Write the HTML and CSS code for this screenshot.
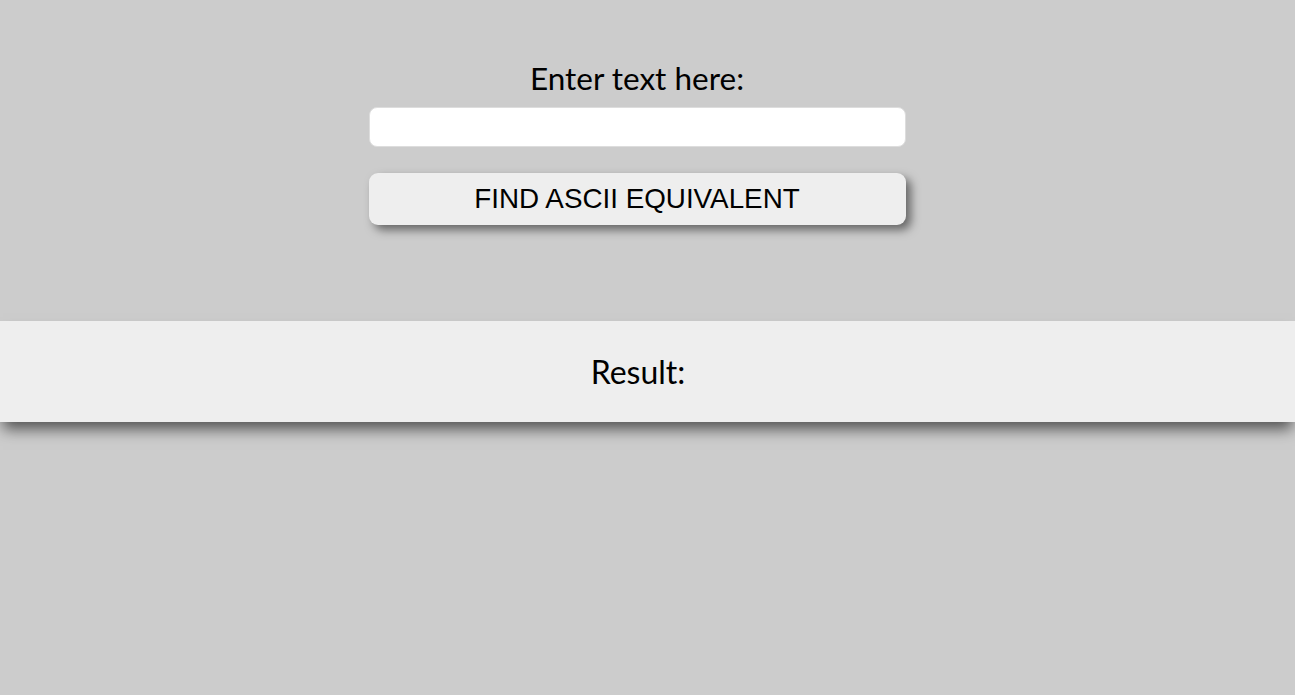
FILE: index.html
```html
<!DOCTYPE html>
<html>
<head>
<meta charset="utf-8">
<link rel="stylesheet" href="styles.css">
</head>
<body>
<div class="form">
  <label class="label" for="txt">Enter text here:</label>
  <input class="input" id="txt" type="text">
  <button class="btn">FIND ASCII EQUIVALENT</button>
</div>
<div class="result"><span class="result-text">Result:</span></div>
</body>
</html>
```
FILE: styles.css
```css
html, body {
  margin: 0;
  padding: 0;
  background: #cccccc;
  height: 100%;
}
body {
  font-family: Lato, "Open Sans", sans-serif;
}
.form {
  display: flex;
  flex-direction: column;
  align-items: center;
  padding-top: 59px;
  padding-right: 21px;
  height: 261px;
  box-sizing: border-box;
}
.label {
  font-size: 31.5px;
  line-height: 38px;
  color: #000;
  margin-bottom: 10px;
}
.input {
  width: 537px;
  height: 40px;
  box-sizing: border-box;
  border: 1px solid #dddddd;
  border-radius: 8px;
  background: #fff;
  outline: none;
  margin: 0;
}
.btn {
  margin-top: 26px;
  width: 537px;
  height: 52px;
  border: none;
  border-radius: 9px;
  background: #eeeeee;
  font-family: "Liberation Sans", Arial, sans-serif;
  font-size: 27.8px;
  color: #000;
  box-shadow: 5px 5px 10px rgba(0, 0, 0, 0.5);
  padding: 0;
}
.result {
  margin-top: 60px;
  height: 101px;
  background: #eeeeee;
  display: flex;
  align-items: center;
  justify-content: center;
  padding-right: 19px;
  font-size: 32px;
  color: #000;
  box-shadow: 0 10px 14px -3px rgba(0, 0, 0, 0.6);
}
```
